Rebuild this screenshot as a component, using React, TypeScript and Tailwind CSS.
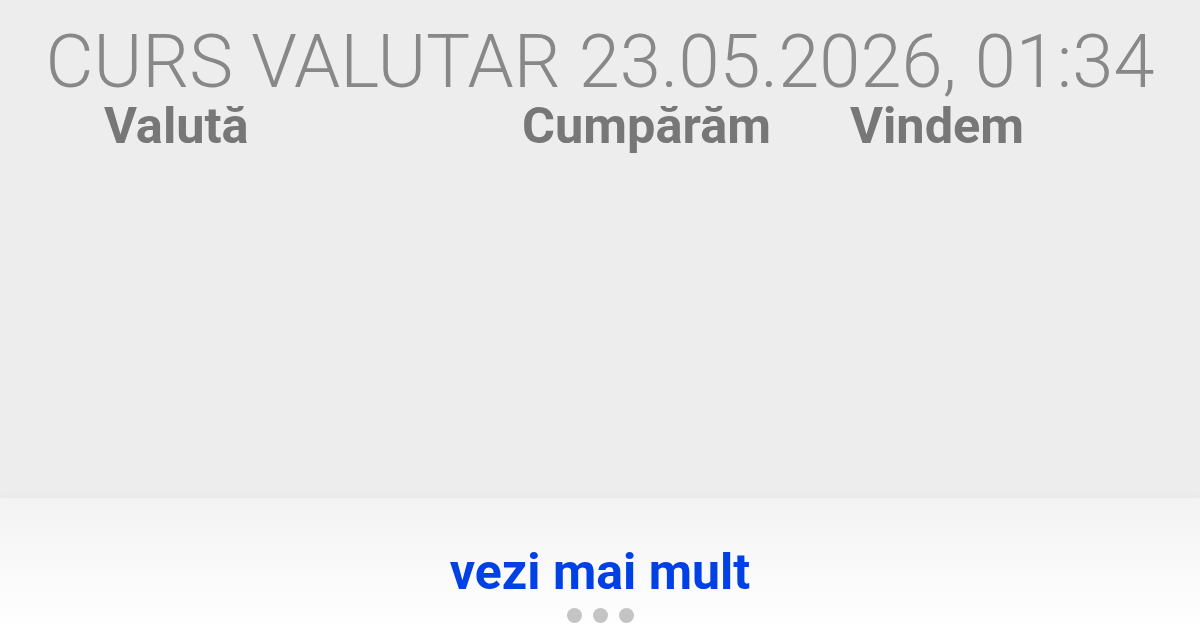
import React from "react";

export default function App() {
  return (
    <div
      className="relative flex h-[630px] w-[1200px] flex-col overflow-hidden bg-[#ededed]"
      style={{ fontFamily: "Roboto, 'Liberation Sans', sans-serif" }}
    >
      <div className="flex-1">
        <h1 className="pt-[25px] text-center text-[74px] font-light leading-none text-[#888888]">
          CURS VALUTAR 23.05.2026, 01:34
        </h1>
        <div className="mt-[2px] flex pl-[104px] text-[50.5px] font-bold leading-none text-[#777777]">
          <div className="w-[418px]">Valută</div>
          <div className="w-[328px]">Cumpărăm</div>
          <div>Vindem</div>
        </div>
      </div>
      <div className="flex h-[132px] flex-col items-center bg-gradient-to-b from-[#f3f3f3] to-white shadow-[0_-4px_8px_rgba(0,0,0,0.02)]">
        <a className="mt-[49px] text-[50px] font-bold leading-none text-[#0041e6]">vezi mai mult</a>
        <div className="mt-[11px] flex gap-[11px]">
          <span className="h-[15px] w-[15px] rounded-full bg-[#c4c4c4]" />
          <span className="h-[15px] w-[15px] rounded-full bg-[#c4c4c4]" />
          <span className="h-[15px] w-[15px] rounded-full bg-[#c4c4c4]" />
        </div>
      </div>
    </div>
  );
}
